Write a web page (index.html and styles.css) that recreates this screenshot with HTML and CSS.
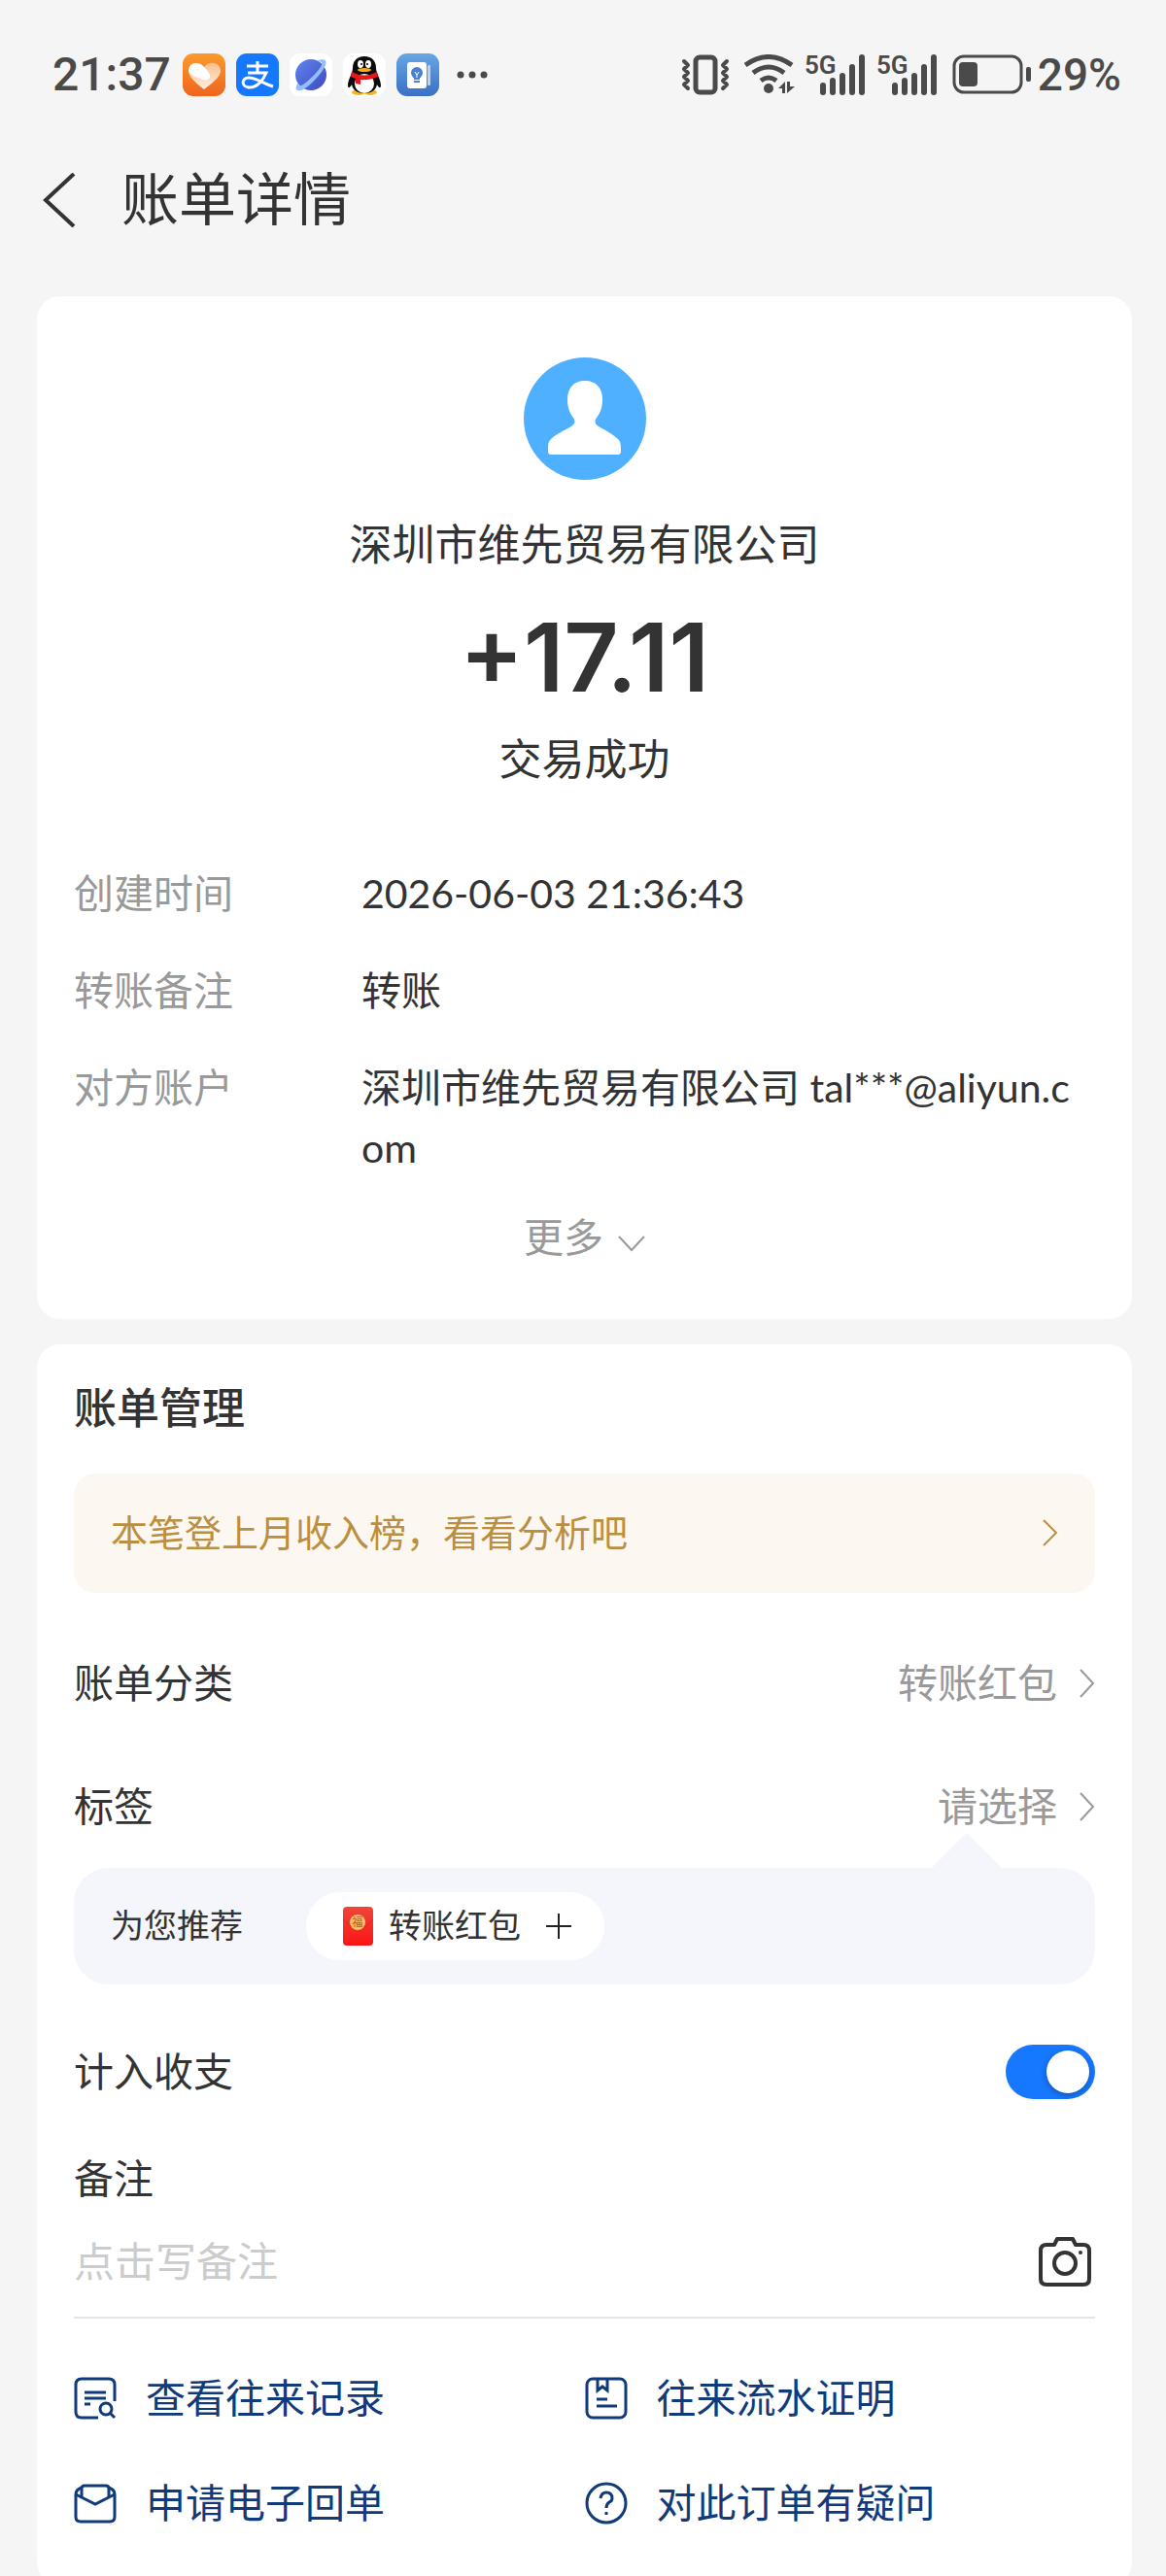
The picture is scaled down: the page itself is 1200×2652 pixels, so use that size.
FILE: index.html
```html
<!DOCTYPE html>
<html lang="zh-CN">
<head>
    <meta charset="UTF-8">
    <meta name="viewport" content="width=device-width, initial-scale=1.0">
    <title>账单详情</title>
    <link rel="stylesheet" href="styles.css">
</head>
<body>
    <div class="status-bar">
        <span class="time">21:37</span>
        <div class="app-icons">
            <svg viewBox="0 0 44 44">
                <defs>
                    <linearGradient id="orange" x1="0" y1="0" x2="0" y2="1">
                        <stop offset="0" stop-color="#fb9a2c"/>
                        <stop offset="1" stop-color="#f0641e"/>
                    </linearGradient>
                    <linearGradient id="heart" x1="0" y1="0" x2="0" y2="1">
                        <stop offset="0" stop-color="#fbc08f"/>
                        <stop offset="1" stop-color="#fdeee2"/>
                    </linearGradient>
                </defs>
                <rect width="44" height="44" rx="11" fill="url(#orange)"/>
                <path d="M22 37C16 32 6 25 6 18C6 9 17 7 22 14C27 7 39 9 39 18C39 25 28 32 22 37Z" fill="url(#heart)"/>
                <path d="M28 22C29 27 24 29 19 26C11 23 6 21 6 17C7 9 16 8 21 13C25 17 27 19 28 22Z" fill="#fff"/>
            </svg>
            <svg viewBox="0 0 44 44">
                <rect width="44" height="44" rx="11" fill="#1677ff"/>
                <g fill="none" stroke="#fff" stroke-width="3">
                    <path d="M11 13H33M22 8V19M12 20H31C28 27 22 35 14 35C5 35 5 25 13 25C20 25 28 31 38 34"/>
                </g>
            </svg>
            <svg viewBox="0 0 44 44">
                <defs>
                    <linearGradient id="planet" x1="0" y1="0" x2="1" y2="1">
                        <stop offset="0" stop-color="#5f86f2"/>
                        <stop offset="1" stop-color="#4048be"/>
                    </linearGradient>
                </defs>
                <rect width="44" height="44" rx="11" fill="#fff"/>
                <circle cx="22" cy="22" r="16" fill="url(#planet)"/>
                <path d="M28 8C34 5 39 6 37 12C34 20 19 36 12 38C6 39 5 36 9 30C9 34 11 34 14 32C21 27 31 17 33 12C34 9 32 8 28 8Z" fill="#8fc0fb"/>
            </svg>
            <svg viewBox="0 0 44 44">
                <rect width="44" height="44" rx="11" fill="#fff"/>
                <ellipse cx="16" cy="40" rx="7" ry="3" fill="#f5b81c"/>
                <ellipse cx="28" cy="40" rx="7" ry="3" fill="#f5b81c"/>
                <path d="M22 3C14 3 10 8 10 15C10 20 5 27 5 33C5 36 7 36 9 32C10 38 15 41 22 41C29 41 34 38 35 32C37 36 39 36 39 33C39 27 34 20 34 15C34 8 30 3 22 3Z" fill="#0b0b0b"/>
                <ellipse cx="22" cy="31" rx="10" ry="10" fill="#fff"/>
                <path d="M9 19Q22 26 35 19L36 24Q26 28 18 27V32L13 31V26L8 24Z" fill="#e8151b"/>
                <ellipse cx="18" cy="11" rx="3" ry="4" fill="#fff"/>
                <ellipse cx="26" cy="11" rx="3" ry="4" fill="#fff"/>
                <circle cx="19" cy="11" r="1"/>
                <circle cx="25" cy="11" r="1"/>
                <ellipse cx="22" cy="17" rx="7" ry="2" fill="#f7a81b"/>
            </svg>
            <svg viewBox="0 0 44 44">
                <defs>
                    <linearGradient id="blue" x1="0" y1="0" x2="0" y2="1">
                        <stop offset="0" stop-color="#67a6e4"/>
                        <stop offset="1" stop-color="#3a6fc6"/>
                    </linearGradient>
                </defs>
                <rect width="44" height="44" rx="11" fill="url(#blue)"/>
                <rect x="11" y="9" width="20" height="27" rx="3" fill="#fff"/>
                <rect x="32" y="12" width="3" height="21" rx="1" fill="#b9d3f3"/>
                <circle cx="21" cy="20" r="6" fill="#4a80cf"/>
                <path d="M18 24H24V27H18ZM18 28H24V30H18Z" fill="#4a80cf"/>
                <path d="M19 19L21 22L23 19M21 22V25" fill="none" stroke="#fff" stroke-width="1"/>
            </svg>
        </div>
        <svg class="dots" viewBox="0 0 32 8">
            <circle cx="4" cy="4" r="3.500"/>
            <circle cx="16" cy="4" r="3.500"/>
            <circle cx="28" cy="4" r="3.500"/>
        </svg>
        <div class="signals">
            <svg class="vibrate" viewBox="0 0 50 42">
                <rect x="15" y="3" width="20" height="36" rx="4" fill="none" stroke="#4a4a4a" stroke-width="5"/>
                <path d="M3 7L7 11L3 15L7 19L3 23L7 27L3 31L7 35M47 7L43 11L47 15L43 19L47 23L43 27L47 31L43 35" fill="none" stroke="#4a4a4a" stroke-width="4" stroke-linecap="round" stroke-linejoin="round"/>
            </svg>
            <svg class="wifi" viewBox="0 0 52 42">
                <g fill="none" stroke="#4a4a4a" stroke-width="5">
                    <path d="M1 11Q25 -6 49 11"/>
                    <path d="M9 19Q25 7 41 19"/>
                    <path d="M17 27Q25 21 33 27"/>
                </g>
                <circle cx="25" cy="35" r="5" fill="#4a4a4a"/>
                <path d="M35 35L42 28V40H39V35ZM44 28H47V33H52L44 40Z" fill="#4a4a4a"/>
            </svg>
            <svg class="signal" viewBox="0 0 62 42">
                <text x="-2" y="20">5G</text>
                <path d="M17 32V39M27 27V39M37 22V39M47 13V39M57 3V39"/>
            </svg>
            <svg class="signal" viewBox="0 0 62 42">
                <text x="-2" y="20">5G</text>
                <path d="M17 32V39M27 27V39M37 22V39M47 13V39M57 3V39"/>
            </svg>
            <svg class="battery" viewBox="0 0 82 42">
                <rect x="2" y="2" width="69" height="37" rx="10" fill="none" stroke="#4a4a4a" stroke-width="3"/>
                <rect x="7" y="8" width="19" height="25" rx="4" fill="#4a4a4a"/>
                <rect x="76" y="13" width="5" height="15" rx="2" fill="#4a4a4a"/>
            </svg>
            <span class="percent">29%</span>
        </div>
    </div>

    <header class="header">
        <button class="back" type="button" aria-label="返回">
            <svg viewBox="0 0 34 56">
                <path d="M32 1L3 28L32 55" fill="none" stroke="#333" stroke-width="4"/>
            </svg>
        </button>
        <h1>账单详情</h1>
    </header>

    <main>
        <section class="card summary">
            <svg class="avatar" viewBox="0 0 126 126">
                <circle cx="63" cy="63" r="63" fill="#4fb0ff"/>
                <path d="M63 24C51 24 45 32 45 43C45 53 48 58 51 62C54 66 52 69 49 71C42 75 33 79 28 84C25 87 25 90 25 96C25 99 26 100 29 100H96C99 100 100 99 100 96C100 90 100 87 97 84C92 79 84 75 77 71C74 69 72 66 75 62C78 58 81 53 81 43C81 32 75 24 63 24Z" fill="#fff"/>
            </svg>
            <p class="company">深圳市维先贸易有限公司</p>
            <p class="amount">+17.11</p>
            <p class="state">交易成功</p>
            <dl class="details">
                <dt>创建时间</dt>
                <dd>2026-06-03 21:36:43</dd>
                <dt>转账备注</dt>
                <dd>转账</dd>
                <dt>对方账户</dt>
                <dd>深圳市维先贸易有限公司 tal***@aliyun.com</dd>
            </dl>
            <button class="more" type="button">
                更多
                <svg viewBox="0 0 28 18">
                    <path d="M1 1L14 15L27 1" fill="none" stroke="#999" stroke-width="2"/>
                </svg>
            </button>
        </section>

        <section class="card manage">
            <h2>账单管理</h2>
            <a class="banner" href="#">
                本笔登上月收入榜，看看分析吧
                <svg class="arrow" viewBox="0 0 17 30">
                    <path d="M2 2L15 15L2 28"/>
                </svg>
            </a>
            <a class="row" href="#">
                <span>账单分类</span>
                <span class="value">转账红包</span>
                <svg class="arrow" viewBox="0 0 17 30">
                    <path d="M2 1L15 15L2 29"/>
                </svg>
            </a>
            <a class="row" href="#">
                <span>标签</span>
                <span class="value">请选择</span>
                <svg class="arrow" viewBox="0 0 17 30">
                    <path d="M2 1L15 15L2 29"/>
                </svg>
            </a>
            <div class="recommend">
                <span>为您推荐</span>
                <button class="chip" type="button">
                    <svg class="packet" viewBox="0 0 31 40">
                        <defs>
                            <linearGradient id="red" x1="0" y1="0" x2="0" y2="1">
                                <stop offset="0" stop-color="#f0453a"/>
                                <stop offset="1" stop-color="#fb1414"/>
                            </linearGradient>
                        </defs>
                        <rect width="31" height="40" rx="4" fill="url(#red)"/>
                        <path d="M0 13Q15 32 31 13" fill="none" stroke="#d82a20" stroke-width="1"/>
                        <circle cx="15" cy="16" r="8" fill="#f8bd6c"/>
                        <text x="15" y="20">福</text>
                    </svg>
                    转账红包
                    <svg class="plus" viewBox="0 0 26 26">
                        <path d="M13 0V26M0 13H26" stroke="#222" stroke-width="2"/>
                    </svg>
                </button>
            </div>
            <div class="switch-row">
                <label for="count">计入收支</label>
                <input class="switch" type="checkbox" id="count" checked>
            </div>
            <label class="note-label" for="note">备注</label>
            <div class="note">
                <input type="text" id="note" placeholder="点击写备注">
                <button type="button" aria-label="添加图片">
                    <svg viewBox="0 0 54 52">
                        <g fill="none" stroke="#333" stroke-width="4" stroke-linejoin="round">
                            <path d="M16 9L19 3H35L38 9H46Q52 9 52 15V44Q52 50 46 50H8Q2 50 2 44V15Q2 9 8 9Z"/>
                            <circle cx="27" cy="28" r="11"/>
                        </g>
                        <circle cx="43" cy="17" r="2" fill="#333"/>
                    </svg>
                </button>
            </div>
            <nav class="links">
                <a href="#">
                    <svg viewBox="0 0 44 44">
                        <path d="M42 25V8Q42 2 36 2H8Q2 2 2 8V36Q2 42 8 42H25"/>
                        <path d="M11 16H33M11 22H33M11 28H17"/>
                        <circle cx="33" cy="33" r="6"/>
                        <path d="M37 37L42 42"/>
                    </svg>
                    查看往来记录
                </a>
                <a href="#">
                    <svg viewBox="0 0 44 44">
                        <rect x="2" y="2" width="40" height="40" rx="6"/>
                        <path d="M13 3V14L18 10L23 14V3M12 23H23M12 30H33"/>
                    </svg>
                    往来流水证明
                </a>
                <a href="#">
                    <svg viewBox="0 0 44 44">
                        <path d="M8 16V7Q8 4 11 4H33Q36 4 36 7V16"/>
                        <path d="M8 6Q2 8 2 13V36Q2 41 7 41H37Q42 41 42 36V13Q42 8 36 6"/>
                        <path d="M2 13L22 23L42 13"/>
                    </svg>
                    申请电子回单
                </a>
                <a href="#">
                    <svg viewBox="0 0 44 44">
                        <circle cx="22" cy="22" r="20"/>
                        <path d="M16 17Q17 11 22 11Q28 11 28 17Q28 20 25 21Q22 23 22 27M22 31V34"/>
                    </svg>
                    对此订单有疑问
                </a>
            </nav>
        </section>
    </main>
</body>
</html>
```

FILE: styles.css
```css
* {
    box-sizing: border-box;
}
body {
    height: 100vh;
    margin: 0;
    overflow-y: auto;
    scrollbar-width: none;
    background-color: #f5f5f5;
    color: #333;
    font-family: Inter, "Noto Sans CJK SC", sans-serif;
    font-size: 41px;
    line-height: 62px;
}
h1, h2, p, dl, dd {
    margin: 0;
}
svg {
    display: block;
    flex: none;
}
a {
    color: inherit;
    text-decoration: none;
}
button {
    padding: 0;
    border: none;
    background: none;
    color: inherit;
    font: inherit;
    cursor: pointer;
}

/* status bar */
.status-bar {
    display: flex;
    align-items: center;
    height: 154px;
    padding: 0 46px 0 54px;
    color: #4a4a4a;
    font-family: Roboto, sans-serif;
    font-size: 48px;
    font-weight: 500;
}
.app-icons {
    display: flex;
    gap: 11px;
    margin-left: 12px;
}
.app-icons svg {
    width: 44px;
    height: 44px;
}
.dots {
    width: 32px;
    height: 8px;
    margin-left: 18px;
    fill: #4a4a4a;
}
.signals {
    display: flex;
    align-items: center;
    margin-left: auto;
}
.signals svg {
    height: 42px;
}
.vibrate {
    width: 50px;
}
.wifi {
    width: 52px;
    margin-left: 15px;
}
.signal {
    width: 62px;
    margin-left: 12px;
    overflow: visible;
}
.signal text {
    fill: #4a4a4a;
    font-size: 26px;
    font-weight: 600;
}
.signal path {
    stroke: #4a4a4a;
    stroke-width: 6;
    stroke-linecap: round;
}
.battery {
    width: 82px;
    margin-left: 14px;
}
.percent {
    margin-left: 6px;
    font-size: 46px;
}

/* title bar */
.header {
    display: flex;
    align-items: center;
    height: 104px;
    margin-bottom: 47px;
    padding-left: 44px;
}
.back svg {
    width: 34px;
    height: 56px;
}
h1 {
    margin-left: 47px;
    font-size: 59px;
    font-weight: 400;
}

.card {
    margin: 0 35px 26px 38px;
    padding: 0 38px;
    border-radius: 24px;
    background-color: #fff;
}

/* payment summary */
.summary {
    display: flex;
    flex-direction: column;
    align-items: center;
    padding-top: 63px;
    padding-bottom: 53px;
}
.avatar {
    width: 126px;
    height: 126px;
}
.company, .state {
    font-size: 44px;
}
.company {
    margin-top: 36px;
}
.amount {
    margin: 35px 0 24px;
    font-size: 98px;
    font-weight: 600;
    line-height: 100px;
}
.details {
    display: grid;
    grid-template-columns: 258px 1fr;
    gap: 38px;
    width: 100%;
    margin-top: 76px;
}
.details dt {
    color: #999;
}
.details dd {
    padding-right: 8px;
    font-family: Lato, "Noto Sans CJK SC", sans-serif;
    word-break: break-all;
}
.more {
    display: flex;
    align-items: center;
    gap: 15px;
    margin-top: 30px;
    color: #999;
}
.more svg {
    width: 28px;
    height: 18px;
    margin-top: 14px;
}

/* bill management */
.manage {
    margin-bottom: 0;
    padding-top: 36px;
    padding-bottom: 31px;
}
h2 {
    font-size: 44px;
    font-weight: 500;
    line-height: 60px;
}
.banner {
    display: flex;
    align-items: center;
    justify-content: space-between;
    height: 123px;
    margin: 37px 0 29px;
    padding: 0 38px 2px;
    border-radius: 22px;
    background-color: #fcf8f1;
    color: #ba9040;
    font-size: 38px;
}
.arrow {
    width: 17px;
    height: 30px;
    fill: none;
    stroke: #999;
    stroke-width: 2;
}
.banner .arrow {
    stroke: #ba9040;
}
.row {
    display: flex;
    align-items: center;
    height: 127px;
}
.value {
    margin: 0 22px 0 auto;
    color: #999;
}
.recommend {
    position: relative;
    display: flex;
    align-items: center;
    gap: 65px;
    height: 120px;
    padding: 0 38px;
    border-radius: 36px;
    background-color: #f5f6fb;
    font-size: 34px;
}
.recommend::before {
    content: "";
    position: absolute;
    right: 96px;
    bottom: 100%;
    border: 36px solid transparent;
    border-top: none;
    border-bottom-color: #f5f6fb;
}
.chip {
    display: flex;
    align-items: center;
    height: 70px;
    padding: 0 34px 0 38px;
    border-radius: 35px;
    background-color: #fff;
}
.packet {
    width: 31px;
    height: 40px;
    margin-right: 16px;
}
.packet text {
    fill: #c8501c;
    font-size: 11px;
    text-anchor: middle;
}
.plus {
    width: 26px;
    height: 26px;
    margin-left: 26px;
}
.switch-row {
    display: flex;
    align-items: center;
    justify-content: space-between;
    height: 126px;
    margin-top: 27px;
}
.switch {
    width: 92px;
    height: 56px;
    margin: 0;
    padding: 6px;
    border-radius: 28px;
    background-color: #ccc;
    appearance: none;
}
.switch::before {
    content: "";
    display: block;
    width: 44px;
    height: 44px;
    border-radius: 50%;
    background-color: #fff;
    box-shadow: 0 2px 6px rgba(0, 0, 0, 0.3);
}
.switch:checked {
    background-color: #1677ff;
}
.switch:checked::before {
    margin-left: auto;
}
.note-label {
    display: block;
    margin-top: 16px;
}
.note {
    display: flex;
    align-items: center;
    margin-top: 19px;
    padding-bottom: 22px;
    border-bottom: 2px solid #e5e5e5;
}
.note input {
    flex: 1;
    min-width: 0;
    height: 70px;
    padding: 0;
    border: none;
    outline: none;
    background: none;
    color: #333;
    font: inherit;
    font-size: 42px;
}
.note input::placeholder {
    color: #ccc;
}
.note svg {
    width: 54px;
    height: 52px;
    margin-right: 4px;
}
.links {
    display: grid;
    grid-template-columns: 1fr 1fr;
    padding-top: 28px;
    color: #113a7a;
}
.links a {
    display: flex;
    align-items: center;
    gap: 30px;
    height: 108px;
}
.links svg {
    width: 44px;
    height: 44px;
    fill: none;
    stroke: #113a7a;
    stroke-width: 3;
}
```
